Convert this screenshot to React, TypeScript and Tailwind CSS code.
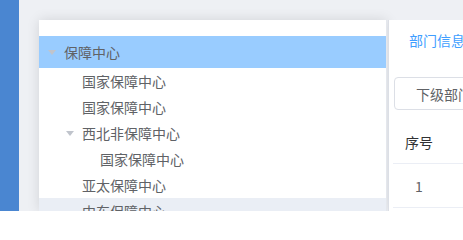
import React from 'react';

interface TreeNode {
  label: string;
  level: number;
  expanded?: boolean;
  selected?: boolean;
  hover?: boolean;
}

const nodes: TreeNode[] = [
  { label: '保障中心', level: 1, expanded: true, selected: true },
  { label: '国家保障中心', level: 2 },
  { label: '国家保障中心', level: 2 },
  { label: '西北非保障中心', level: 2, expanded: true },
  { label: '国家保障中心', level: 3 },
  { label: '亚太保障中心', level: 2 },
  { label: '中东保障中心', level: 2, hover: true },
];

const Caret = () => (
  <svg width="8" height="5" viewBox="0 0 8 5" className="block">
    <path d="M0 0 L8 0 L4 5 Z" fill="#c0c4cc" />
  </svg>
);

const TreeRow = ({ node }: { node: TreeNode }) => {
  const pad = node.level === 1 ? 'pl-[1px]' : node.level === 2 ? 'pl-[19px]' : 'pl-[37px]';
  const bg = node.selected ? 'bg-[#99ccff]' : node.hover ? 'bg-[#eaeef5]' : 'bg-white';
  const height = node.level === 1 ? 'h-[32px]' : 'h-[26px]';
  return (
    <div className={`flex shrink-0 items-center ${height} ${pad} ${bg}`}>
      <div className="flex w-[24px] items-center justify-center">
        {node.expanded ? <Caret /> : null}
      </div>
      <span className="text-[14px] leading-none text-[#606266]">{node.label}</span>
    </div>
  );
};

const App = () => {
  return (
    <div
      className="flex h-[211px] w-[463px] overflow-hidden bg-[#eef0f4]"
      style={{ fontFamily: '"Noto Sans CJK SC", "Liberation Sans", sans-serif' }}
    >
      <div className="w-[19px] shrink-0 bg-[#4a86d1]" />
      <div className="flex min-h-0 flex-1 pl-[20px] pt-[20px]">
        <div className="flex w-[348px] shrink-0 flex-col overflow-hidden border-r border-[#e4e7ed] bg-white pt-[16px] shadow-[0_0_12px_rgba(0,0,0,0.12)]">
          {nodes.map((node, index) => (
            <TreeRow key={index} node={node} />
          ))}
        </div>
        <div className="ml-[1px] flex flex-1 flex-col overflow-hidden border-l border-[#dcdfe6] bg-white pt-[12px]">
          <div className="flex h-[16px] shrink-0 items-center pl-[20px]">
            <span className="whitespace-nowrap text-[14px] leading-none text-[#409eff]">部门信息</span>
          </div>
          <div className="mt-[29px] shrink-0 pl-[5px]">
            <div className="flex h-[33px] w-[110px] items-center rounded-[4px] border border-[#dcdfe6] pl-[21px]">
              <span className="whitespace-nowrap text-[14px] leading-none text-[#606266]">下级部门</span>
            </div>
          </div>
          <div className="mt-[10px] ml-[4px] shrink-0">
            <div className="flex h-[44px] items-center border-b border-[#ebeef5] pl-[12px]">
              <span className="whitespace-nowrap text-[14px] leading-none text-[#303133]">序号</span>
            </div>
            <div className="flex h-[44px] items-center border-b border-[#ebeef5] pl-[22px]">
              <span className="text-[14px] leading-none text-[#606266]">1</span>
            </div>
          </div>
        </div>
      </div>
    </div>
  );
};

export default App;
